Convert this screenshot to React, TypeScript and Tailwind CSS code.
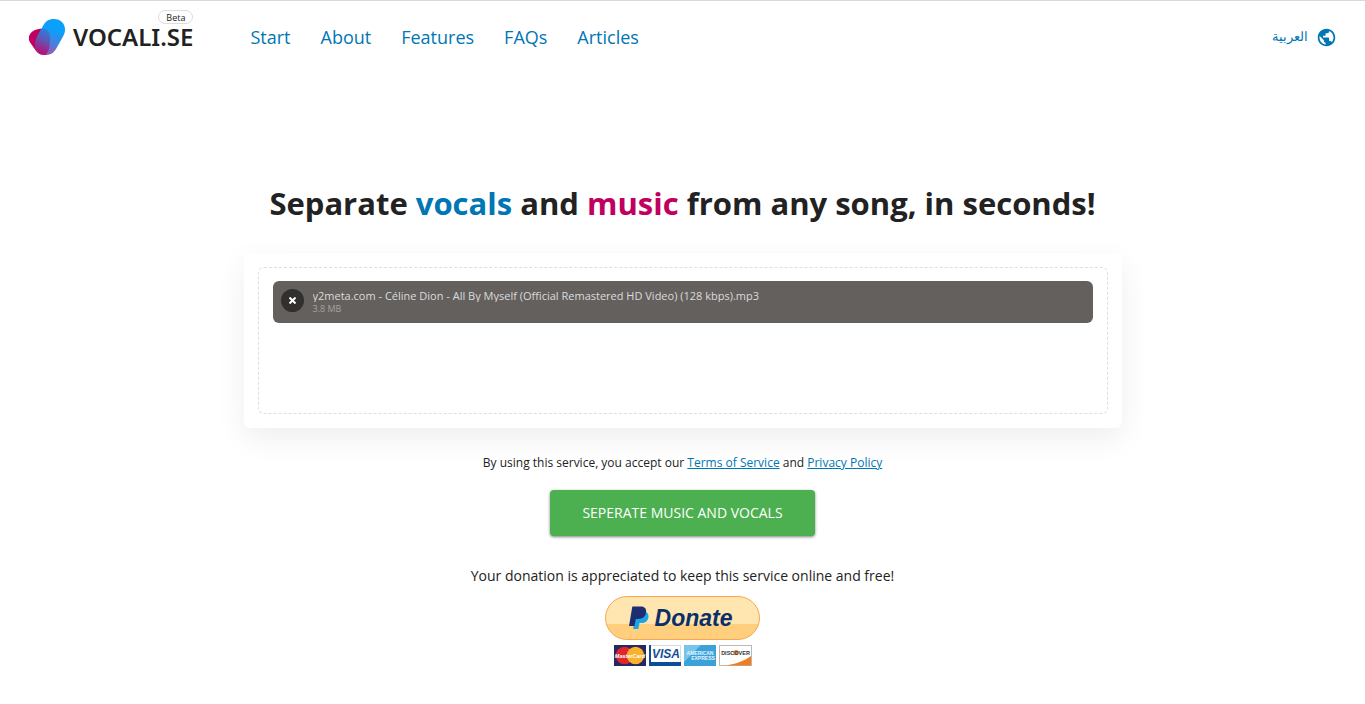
import React from "react";

const navLinks = [
  { label: "Start", href: "#start" },
  { label: "About", href: "#about" },
  { label: "Features", href: "#features" },
  { label: "FAQs", href: "#faqs" },
  { label: "Articles", href: "#articles" },
];

function LogoMark() {
  return (
    <svg width="38" height="38" viewBox="0 0 38 38" aria-hidden="true">
      <defs>
        <linearGradient id="blade" x1="27" y1="4" x2="14" y2="37" gradientUnits="userSpaceOnUse">
          <stop offset="0.2" stopColor="#0aa0fb" />
          <stop offset="0.6" stopColor="#4a7fdc" />
          <stop offset="1" stopColor="#b04aa4" />
        </linearGradient>
        <linearGradient id="overlap" x1="23" y1="10" x2="12" y2="36" gradientUnits="userSpaceOnUse">
          <stop offset="0.05" stopColor="#1b88e2" />
          <stop offset="0.5" stopColor="#6256b4" />
          <stop offset="1" stopColor="#c00870" />
        </linearGradient>
        <path
          id="bladeShape"
          d="M15.500 7C18 2.500 22 1 26 1C32.500 1 37 5.500 37 11.500C37 14.500 36 17 34.500 19.500L28 31C25.500 35.500 21.500 37 17.500 37C11.500 37 7 33 7 27.500C7 24.500 7.500 22.500 9 19Z"
        />
        <clipPath id="bladeClip">
          <use href="#bladeShape" />
        </clipPath>
      </defs>
      <path
        d="M6 12.5C9 11 13 10.500 16.500 11C21 12 22.500 17 22 23C21.700 29 21 33 17.500 37C13 37.500 10 35.500 8 33L2.500 25C-.5 21 .5 15.500 6 12.500Z"
        fill="#c00060"
      />
      <use href="#bladeShape" fill="url(#blade)" />
      <path
        d="M6 12.5C9 11 13 10.500 16.500 11C21 12 22.500 17 22 23C21.700 29 21 33 17.500 37C13 37.500 10 35.500 8 33L2.500 25C-.5 21 .5 15.500 6 12.500Z"
        fill="url(#overlap)"
        clipPath="url(#bladeClip)"
      />
    </svg>
  );
}

function GlobeIcon() {
  return (
    <svg width="21" height="21" viewBox="0 0 24 24" fill="currentColor" aria-hidden="true">
      <path d="M12 2C6.480 2 2 6.480 2 12s4.480 10 10 10 10-4.480 10-10S17.520 2 12 2zm-1 17.930c-3.950-.49-7-3.850-7-7.930 0-.62.08-1.210.21-1.790L9 15v1c0 1.100.9 2 2 2v1.930zm6.900-2.540c-.26-.81-1-1.390-1.900-1.390h-1v-3c0-.55-.45-1-1-1H8v-2h2c.55 0 1-.45 1-1V7h2c1.100 0 2-.9 2-2v-.41c2.930 1.190 5 4.060 5 7.410 0 2.080-.8 3.970-2.100 5.390z" />
    </svg>
  );
}

function Header() {
  return (
    <header className="flex h-[73px] items-center border-t border-[#dadada] px-7">
      <a href="#home" className="relative flex items-center gap-[7px] text-[#222]">
        <LogoMark />
        <span className="font-['Noto_Sans',sans-serif] text-2xl leading-9 font-semibold">VOCALI.SE</span>
        <span className="absolute -top-2 right-0 flex h-3.5 items-center rounded-full border border-[#ddd] bg-white px-[7px] text-[9px] leading-none">
          Beta
        </span>
      </a>
      <nav className="ml-[57px] flex gap-[30px] text-lg text-[#0076b4]">
        {navLinks.map((link) => (
          <a key={link.label} href={link.href}>
            {link.label}
          </a>
        ))}
      </nav>
      <a href="#ar" lang="ar" className="ml-auto flex items-center gap-2 text-[13px] text-[#0076b4]">
        <span>العربية</span>
        <GlobeIcon />
      </a>
    </header>
  );
}

function FileItem() {
  return (
    <div className="flex h-[42px] gap-[9px] rounded-md bg-[#64605e] px-2 pt-2 text-white">
      <button
        type="button"
        aria-label="Remove file"
        className="flex size-[23px] shrink-0 items-center justify-center rounded-full bg-[#31302f]"
      >
        <svg width="7" height="7" viewBox="0 0 7 7" stroke="white" strokeWidth="2" aria-hidden="true">
          <path d="M.5.5l6 6M6.500.5l-6 6" />
        </svg>
      </button>
      <div className="min-w-0">
        <p className="truncate text-[11px] leading-[13px] text-[#dcdbdb]">
          y2meta.com - Céline Dion - All By Myself (Official Remastered HD Video) (128 kbps).mp3
        </p>
        <p className="text-[9px] leading-[13px] text-[#a4a2a1]">3.8 MB</p>
      </div>
    </div>
  );
}

function PayPalMark() {
  return (
    <svg width="20" height="24" viewBox="0 0 20 24" aria-hidden="true">
      <path d="M7 6h10c2.300 1 3 3.400 2.300 6.300-.9 3-3 4.700-6.300 4.700h-2.500L9.300 23H4.200z" fill="#1aa3e6" />
      <path d="M3.300.5h8.500c4 0 6 2.300 5.200 6.300-.8 4.200-3.600 6.200-7.700 6.200H6.800L5.400 20H0z" fill="#1c2e70" />
    </svg>
  );
}

function CardLogos() {
  return (
    <svg width="138" height="21" viewBox="0 0 138 21" role="img" aria-label="Accepted cards">
      <rect x="0" y="0" width="32" height="21" fill="#242863" />
      <circle cx="10.500" cy="10.500" r="8.700" fill="#e0262c" />
      <circle cx="21.500" cy="10.500" r="8.700" fill="#f9b22c" />
      <text x="16" y="12.500" textAnchor="middle" fontFamily="Liberation Sans, sans-serif" fontSize="5.500" fontWeight="bold" fontStyle="italic" fill="#fff">
        MasterCard
      </text>
      <rect x="35.500" y=".5" width="31" height="20" fill="#fff" stroke="#d5dbe3" />
      <path d="M35 0h2v17h30v4H35z" fill="#0d4e97" />
      <text x="52" y="13" textAnchor="middle" fontFamily="Liberation Sans, sans-serif" fontSize="12" fontWeight="bold" fontStyle="italic" fill="#134f96">
        VISA
      </text>
      <rect x="70" y="0" width="32" height="21" fill="#3ba2d9" />
      <path d="M70 0h17L70 17z" fill="#78c4ea" />
      <text x="86" y="10" textAnchor="middle" fontFamily="Liberation Sans, sans-serif" fontSize="5" fontWeight="bold" fill="#e4f4fc">
        AMERICAN
      </text>
      <text x="89" y="15" textAnchor="middle" fontFamily="Liberation Sans, sans-serif" fontSize="5" fontWeight="bold" fill="#e4f4fc">
        EXPRESS
      </text>
      <rect x="105.500" y=".5" width="32" height="20" fill="#fff" stroke="#b9b9b9" />
      <path d="M137 11v9.500h-25c10-1.500 18-4.500 25-9.500z" fill="#ee7d24" />
      <circle cx="122" cy="7.500" r="2.600" fill="#f08a3c" />
      <text x="121.500" y="9.500" textAnchor="middle" fontFamily="Liberation Sans, sans-serif" fontSize="5.500" fontWeight="bold" fill="#333">
        DISCOVER
      </text>
    </svg>
  );
}

export default function App() {
  return (
    <div className="font-['Open_Sans',sans-serif] text-[#222]">
      <Header />
      <main className="mx-auto flex w-full max-w-[878px] flex-col items-center pt-[106px] pb-9">
        <h1 className="text-center text-[31px] leading-[48px] font-bold">
          Separate <span className="text-[#0076b4]">vocals</span> and{" "}
          <span className="text-[#c00060]">music</span> from any song, in seconds!
        </h1>
        <section className="mt-[26px] w-full rounded-md bg-white p-3.5 shadow-[0_10px_30px_rgba(0,0,0,0.07)]">
          <div className="min-h-[147px] rounded-md border border-dashed border-[#dedede] px-3.5 py-[13px]">
            <FileItem />
          </div>
        </section>
        <p className="mt-[27px] text-xs leading-4">
          By using this service, you accept our{" "}
          <a href="#terms" className="text-[#0076b4] underline">
            Terms of Service
          </a>{" "}
          and{" "}
          <a href="#privacy" className="text-[#0076b4] underline">
            Privacy Policy
          </a>
        </p>
        <button
          type="button"
          className="mt-[19px] h-[46px] rounded-sm bg-[#4caf50] px-8 text-sm text-white uppercase shadow-[0_1px_3px_rgba(0,0,0,0.5)]"
        >
          Seperate music and vocals
        </button>
        <p className="mt-7 text-sm leading-6">Your donation is appreciated to keep this service online and free!</p>
        <form className="mt-2 flex flex-col items-center gap-[5px]">
          <button
            type="button"
            className="flex h-[44px] w-[155px] items-center justify-center gap-1.5 rounded-full border border-[#f9a650] bg-linear-to-b from-[#ffe5b0] from-65% to-[#ffcf7e] to-65% pr-1 font-['Liberation_Sans',sans-serif] text-[23px] font-bold text-[#0b2f66] italic"
          >
            <PayPalMark />
            Donate
          </button>
          <CardLogos />
        </form>
      </main>
    </div>
  );
}
